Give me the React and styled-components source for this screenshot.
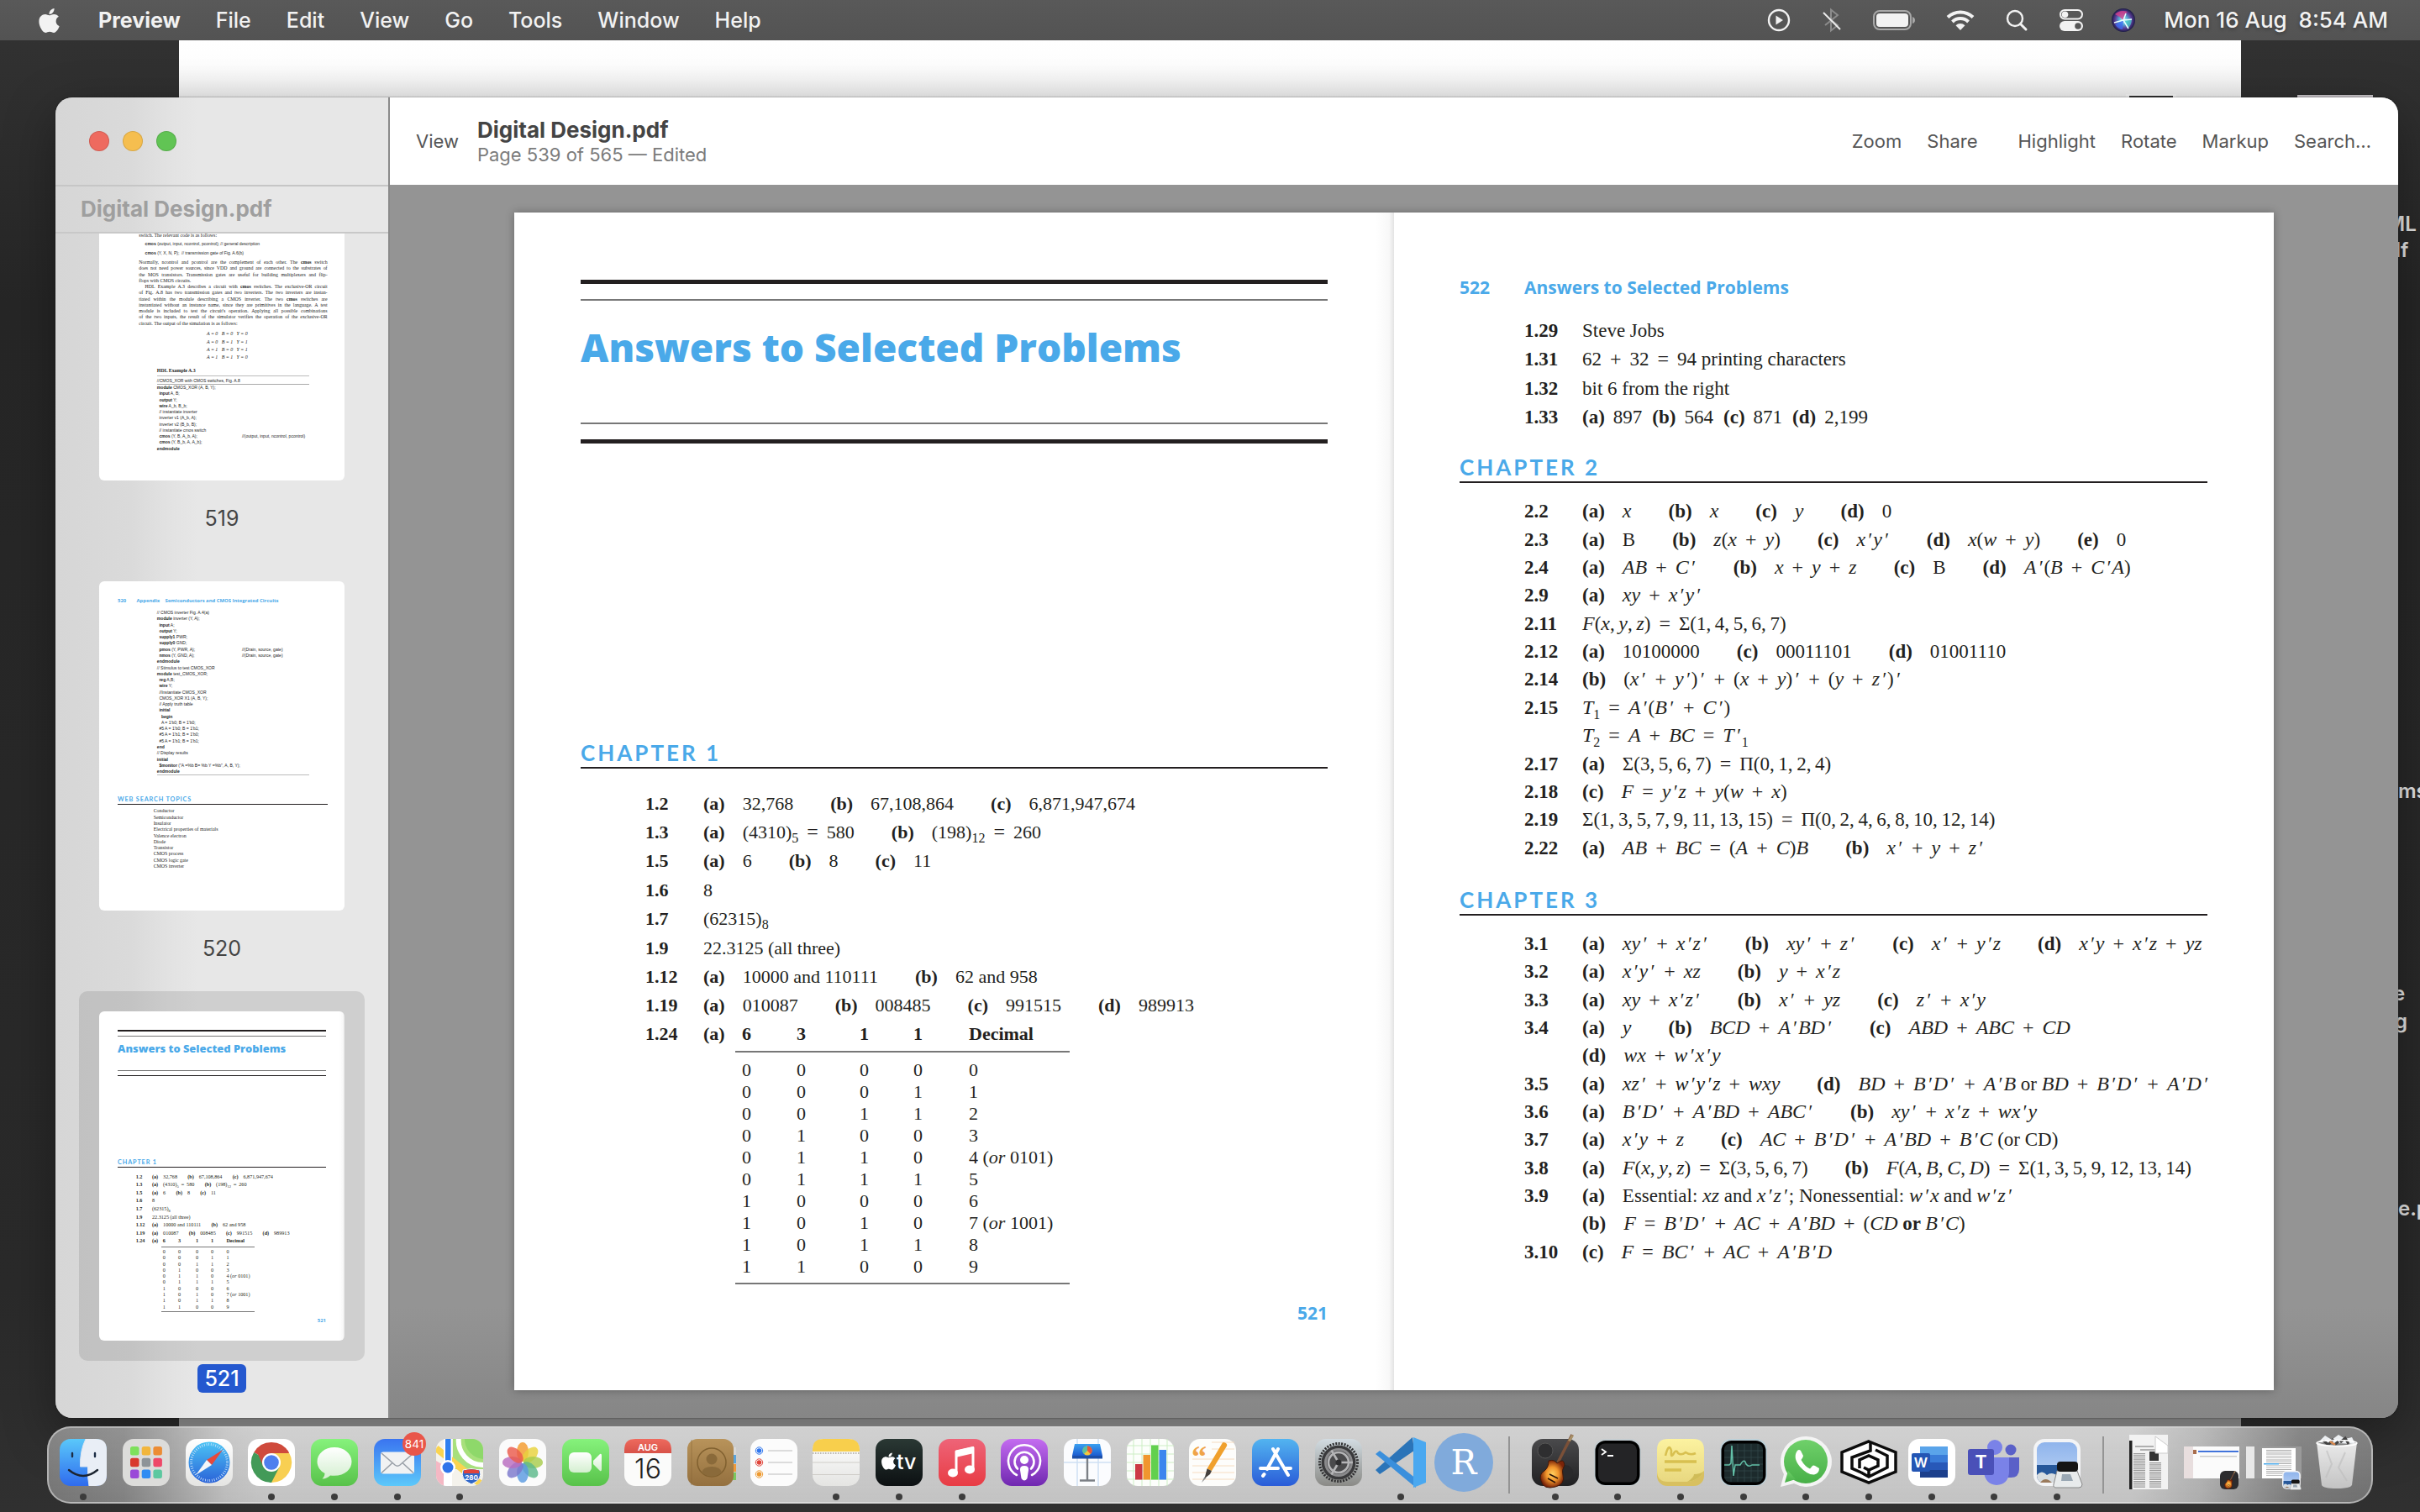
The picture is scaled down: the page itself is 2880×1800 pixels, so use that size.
import React from "react";
import styled, { createGlobalStyle, css } from "styled-components";
import { FaApple } from "react-icons/fa";

const ui = `Inter, "Liberation Sans", sans-serif`;
const serif = `"Liberation Serif", "Times New Roman", serif`;
const humanist = `Lato, "Open Sans", sans-serif`;
const display = `"Open Sans", "Noto Sans", sans-serif`;
const ink = "#231f20";
const blue = "#4aa9e9";

const GlobalStyle = createGlobalStyle`
  * { box-sizing: border-box; }
  html, body { margin: 0; height: 100%; overflow: hidden; }
  body { font-family: ${ui}; background: #2d2d2d; }
  #root { height: 100%; }
  button { font: inherit; color: inherit; background: none; border: 0; padding: 0; white-space: nowrap; }
  svg { display: block; overflow: visible; }
`;

/* ---------- desktop ---------- */

const Desktop = styled.div`
  position: relative;
  min-height: 100vh;
  overflow: hidden;
  background: linear-gradient(180deg, #333 0%, #262626 20%, #2a2a2a 85%, #303030 100%);
`;

const BackWindow = styled.div`
  position: absolute;
  inset: 48px 213px 20px 213px;
  background: linear-gradient(180deg, #fff 0, #fdfdfd 28px, #ececec 68px, #9a9a9a 90px, #9a9a9a 100%);
`;

const DesktopItem = styled.span`
  position: absolute;
  top: ${(p) => p.$top}px;
  left: ${(p) => p.$left}px;
  font-size: 24px;
  font-weight: 600;
  line-height: 30px;
  color: #e4e4e4;
  white-space: nowrap;
`;

const DesktopFile = styled.span`
  position: absolute;
  top: ${(p) => p.$top}px;
  left: ${(p) => p.$left}px;
  width: ${(p) => p.$width}px;
  height: 8px;
  background: ${(p) => p.$tone};
`;

/* ---------- menu bar ---------- */

const MenuBar = styled.header`
  position: relative;
  display: flex;
  align-items: center;
  justify-content: space-between;
  height: 48px;
  padding: 0 38px 0 42px;
  background: linear-gradient(180deg, #595959, #535353);
  color: #f2f2f2;
  font-size: 25px;
  line-height: 48px;
  text-shadow: 0 2px 4px rgba(0, 0, 0, 0.3);
`;

const MenuGroup = styled.nav`
  display: flex;
  align-items: center;
  gap: 42px;
`;

const StatusGroup = styled.div`
  display: flex;
  align-items: center;
  gap: 34px;
`;

const MenuItem = styled.button`
  font-weight: ${(p) => (p.$strong ? 700 : 500)};
`;

const StatusButton = styled.button`
  display: flex;
  justify-content: center;
  width: ${(p) => p.$width}px;
`;

const Clock = styled.time`
  font-size: 26px;
  font-weight: 500;
  white-space: pre;
`;

/* ---------- window ---------- */

const Window = styled.main`
  position: absolute;
  inset: 116px 26px 112px 66px;
  display: grid;
  grid-template-columns: 398px minmax(0, 1fr);
  border-radius: 20px;
  overflow: hidden;
  background: #949494;
  box-shadow: 0 0 2px rgba(0, 0, 0, 0.6), 0 20px 60px rgba(0, 0, 0, 0.35);
`;

const Sidebar = styled.aside`
  display: flex;
  flex-direction: column;
  min-height: 0;
  border-right: 2px solid #8b8b8b;
  background: linear-gradient(90deg, #d6d6d6 0, #dadada 90px, #e3e3e3 140px, #e7e7e7 170px);
`;

const TrafficLights = styled.div`
  display: flex;
  align-items: center;
  gap: 16px;
  flex: 0 0 104px;
  padding-left: 40px;
`;

const Light = styled.button`
  width: 24px;
  height: 24px;
  border-radius: 50%;
  background: ${(p) => p.$tone};
  box-shadow: inset 0 0 0 1px rgba(0, 0, 0, 0.12);
`;

const SidebarTitle = styled.h2`
  flex: 0 0 56px;
  margin: 0;
  padding-left: 30px;
  border-top: 2px solid #c6c6c6;
  border-bottom: 2px solid #c8c8c8;
  font-size: 26px;
  font-weight: 700;
  line-height: 54px;
  color: #9f9f9f;
`;

const ThumbList = styled.div`
  flex: 1;
  min-height: 0;
  display: flex;
  flex-direction: column;
  justify-content: flex-end;
  align-items: center;
  gap: 34px;
  padding-bottom: 30px;
  overflow: hidden;
`;

const ThumbItem = styled.button`
  display: flex;
  flex-direction: column;
  align-items: center;
  gap: 4px;
  flex: none;
  text-align: left;
  white-space: normal;
`;

const ThumbFrame = styled.span`
  display: block;
  padding: 24px;
  border-radius: 10px;
  background: ${(p) => (p.$selected ? "rgba(0, 0, 0, 0.1)" : "transparent")};
`;

const ThumbPaper = styled.span`
  display: block;
  width: 292px;
  height: 392px;
  border-radius: 6px;
  overflow: hidden;
  background: #fff;
`;

const Miniature = styled.span`
  display: block;
  zoom: 28%;
  width: 1043px;
  color: #1c1c1c;
`;

const ThumbLabel = styled.span`
  padding: 0 8px;
  border-radius: 6px;
  font-size: 25px;
  line-height: 34px;
  color: ${(p) => (p.$selected ? "#fff" : "#444")};
  background: ${(p) => (p.$selected ? "#2458cf" : "transparent")};
  font-weight: ${(p) => (p.$selected ? 500 : 400)};
`;

const Content = styled.section`
  display: flex;
  flex-direction: column;
  min-width: 0;
  background: linear-gradient(180deg, #949494 0, #949494 1440px, #868686 100%);
`;

const Toolbar = styled.div`
  display: flex;
  align-items: center;
  flex: 0 0 104px;
  padding: 0 32px 0 31px;
  background: #fff;
  color: #555;
  font-size: 22px;
`;

const DocTitle = styled.div`
  flex: 1;
  padding-left: 22px;
`;

const DocName = styled.h1`
  margin: 0;
  font-size: 26px;
  font-weight: 700;
  line-height: 32px;
  color: #444;
`;

const DocStatus = styled.p`
  margin: 0;
  line-height: 26px;
  color: #7b7b7b;
`;

const ToolGroup = styled.div`
  display: flex;
  gap: 30px;
  & + & { margin-left: 48px; }
`;

const Spread = styled.div`
  display: grid;
  grid-template-columns: minmax(0, 1fr) minmax(0, 1fr);
  margin: 33px 148px;
  background: #fff;
  box-shadow: 0 0 10px rgba(0, 0, 0, 0.3);
`;

/* ---------- printed page ---------- */

const Page = styled.article`
  display: block;
  padding: ${(p) => p.$top}px 79px 80px ${(p) => (p.$spine ? 79 : 78)}px;
  background: ${(p) => (p.$spine ? "linear-gradient(270deg, #e4e4e4 0, #f8f8f8 6px, #fff 22px)" : "#fff")};
  font-family: ${serif};
  font-size: ${(p) => p.$size}px;
  color: ${ink};
`;

const Rule = styled.hr`
  margin: ${(p) => p.$above || 0}px 0 0;
  border: 0;
  height: ${(p) => (p.$thick ? 5 : 2)}px;
  background: ${(p) => (p.$thick ? ink : "#777")};
`;

const PageTitle = styled.h2`
  margin: 27px 0 62px;
  font-family: ${display};
  font-size: 46px;
  font-weight: 800;
  line-height: 56px;
  white-space: nowrap;
  color: ${blue};
`;

const ChapterHeading = styled.h3`
  margin: ${(p) => p.$above}px 0 ${(p) => p.$below}px;
  padding-bottom: 2px;
  border-bottom: 2px solid ${ink};
  font-family: ${humanist};
  font-size: 26px;
  font-weight: 700;
  line-height: 30px;
  letter-spacing: 3px;
  color: ${blue};
`;

const PageNumber = styled.p`
  margin: 22px 0 0;
  text-align: right;
  font-family: ${display};
  font-size: 21px;
  font-weight: 700;
  line-height: 24px;
  color: ${blue};
`;

const RunningHead = styled.p`
  display: flex;
  gap: 41px;
  margin: 0 0 22px;
  font-family: ${display};
  font-size: 21px;
  font-weight: 700;
  line-height: 24px;
  color: ${blue};
`;

const AnswerList = styled.div`
  display: grid;
  grid-auto-rows: minmax(0, 1fr);
  min-height: ${(p) => p.$height}px;
  padding-left: 77px;
`;

const AnswerRow = styled.div`
  display: grid;
  grid-template-columns: 69px minmax(0, 1fr);
  align-items: center;
  line-height: 33px;
  white-space: nowrap;
`;

const Answers = styled.div`
  display: flex;
  gap: ${(p) => (p.$tight ? 12 : 44)}px;
`;

const Answer = styled.span`
  display: flex;
  gap: ${(p) => (p.$tight ? 10 : 21)}px;
`;

const Variable = styled.i`
  font-size: 24px;
  line-height: 0;
`;

const Operator = styled.span`
  margin: 0 10px;
  font-size: 24px;
  line-height: 0;
`;

const Prime = styled.i`
  margin: 0 2px;
  line-height: 0;
`;

const Sub = styled.sub`
  font-size: 16px;
  line-height: 0;
`;

const TableRow = styled.div`
  display: grid;
  grid-template-columns: 69px 38px 398px;
  padding-left: 77px;
  line-height: 34px;
`;

const TruthTable = styled.table`
  width: 398px;
  table-layout: fixed;
  border-collapse: separate;
  border-spacing: 0;
  border-bottom: 2px solid #777;
  text-align: left;
  th {
    padding: 0 0 3px;
    border-bottom: 2px solid #777;
    line-height: 34px;
  }
  td { padding: 0; line-height: 26px; }
  th:first-child, td:first-child { padding-left: 8px; }
  tbody tr:first-child td { padding-top: 8px; }
  tbody tr:last-child td { padding-bottom: 6px; }
`;

function Formula({ text }) {
  const parts = text.match(/\{[^}]*\}|\*[^*]+\*|_\d+|[A-Za-z]+|'|[+=]|,|[^A-Za-z'+=,{_*]+/g) || [];
  return (
    <span>
      {parts.map((t, i) => {
        if (t[0] === "{") return <span key={i}>{t.slice(1, -1)}</span>;
        if (t[0] === "*") return <b key={i}>{t.slice(1, -1)}</b>;
        if (t[0] === "_") return <Sub key={i}>{t.slice(1)}</Sub>;
        if (t === "'") return <Prime key={i}>′</Prime>;
        if (t === "+" || t === "=") return <Operator key={i}>{t}</Operator>;
        if (t === ",") return <span key={i}>{",\u2009"}</span>;
        if (/^[A-Za-z]/.test(t)) return <Variable key={i}>{t}</Variable>;
        return <span key={i}>{t}</span>;
      })}
    </span>
  );
}

function AnswerRows({ rows, height, tight }) {
  return (
    <AnswerList $height={height}>
      {rows.map(([num, ...answers], i) => (
        <AnswerRow key={i}>
          <b>{num}</b>
          <Answers $tight={tight && answers.length > 1}>
            {answers.map(([label, text], k) => (
              <Answer key={k} $tight={tight}>
                {label && <b>({label})</b>}
                <Formula text={text} />
              </Answer>
            ))}
          </Answers>
        </AnswerRow>
      ))}
    </AnswerList>
  );
}

const chapterOne = [
  ["1.2", ["a", "{32,768}"], ["b", "{67,108,864}"], ["c", "{6,871,947,674}"]],
  ["1.3", ["a", "(4310)_5=580"], ["b", "(198)_12=260"]],
  ["1.5", ["a", "6"], ["b", "8"], ["c", "11"]],
  ["1.6", ["", "8"]],
  ["1.7", ["", "(62315)_8"]],
  ["1.9", ["", "{22.3125 (all three)}"]],
  ["1.12", ["a", "{10000 and 110111}"], ["b", "{62 and 958}"]],
  ["1.19", ["a", "010087"], ["b", "008485"], ["c", "991515"], ["d", "989913"]],
];

const chapterOneRest = [
  ["1.29", ["", "{Steve Jobs}"]],
  ["1.31", ["", "62+32=94{ printing characters}"]],
  ["1.32", ["", "{bit 6 from the right}"]],
  ["1.33", ["a", "897"], ["b", "564"], ["c", "871"], ["d", "{2,199}"]],
];

const chapterTwo = [
  ["2.2", ["a", "x"], ["b", "x"], ["c", "y"], ["d", "0"]],
  ["2.3", ["a", "{B}"], ["b", "z(x+y)"], ["c", "x'y'"], ["d", "x(w+y)"], ["e", "0"]],
  ["2.4", ["a", "AB+C'"], ["b", "x+y+z"], ["c", "{B}"], ["d", "A'(B+C'A)"]],
  ["2.9", ["a", "xy+x'y'"]],
  ["2.11", ["", "F(x,y,z)=Σ(1,4,5,6,7)"]],
  ["2.12", ["a", "10100000"], ["c", "00011101"], ["d", "01001110"]],
  ["2.14", ["b", "(x'+y')'+(x+y)'+(y+z')'"]],
  ["2.15", ["", "T_1=A'(B'+C')"]],
  ["", ["", "T_2=A+BC=T'_1"]],
  ["2.17", ["a", "Σ(3,5,6,7)=Π(0,1,2,4)"]],
  ["2.18", ["c", "F=y'z+y(w+x)"]],
  ["2.19", ["", "Σ(1,3,5,7,9,11,13,15)=Π(0,2,4,6,8,10,12,14)"]],
  ["2.22", ["a", "AB+BC=(A+C)B"], ["b", "x'+y+z'"]],
];

const chapterThree = [
  ["3.1", ["a", "xy'+x'z'"], ["b", "xy'+z'"], ["c", "x'+y'z"], ["d", "x'y+x'z+yz"]],
  ["3.2", ["a", "x'y'+xz"], ["b", "y+x'z"]],
  ["3.3", ["a", "xy+x'z'"], ["b", "x'+yz"], ["c", "z'+x'y"]],
  ["3.4", ["a", "y"], ["b", "BCD+A'BD'"], ["c", "ABD+ABC+CD"]],
  ["", ["d", "wx+w'x'y"]],
  ["3.5", ["a", "xz'+w'y'z+wxy"], ["d", "BD+B'D'+A'B{ or }BD+B'D'+A'D'"]],
  ["3.6", ["a", "B'D'+A'BD+ABC'"], ["b", "xy'+x'z+wx'y"]],
  ["3.7", ["a", "x'y+z"], ["c", "AC+B'D'+A'BD+B'C{ (or CD)}"]],
  ["3.8", ["a", "F(x,y,z)=Σ(3,5,6,7)"], ["b", "F(A,B,C,D)=Σ(1,3,5,9,12,13,14)"]],
  ["3.9", ["a", "{Essential: }xz{ and }x'z'{; Nonessential: }w'x{ and }w'z'"]],
  ["", ["b", "F=B'D'+AC+A'BD+(CD* or *B'C)"]],
  ["3.10", ["c", "F=BC'+AC+A'B'D"]],
];

const truthRows = ["0000", "0001", "0011", "0100", "0110", "0111", "1000", "1010", "1011", "1100"];
const alternates = { 4: "0101", 7: "1001" };

function AnswersPage() {
  return (
    <Page $top={80} $size={22} $spine>
      <Rule $thick />
      <Rule $above={18} />
      <PageTitle>Answers to Selected Problems</PageTitle>
      <Rule />
      <Rule $thick $above={18} />
      <ChapterHeading $above={353} $below={24}>CHAPTER 1</ChapterHeading>
      <AnswerRows rows={chapterOne} height={275} />
      <TableRow>
        <b>1.24</b>
        <b>(a)</b>
        <TruthTable>
          <colgroup>
            <col width="73" />
            <col width="75" />
            <col width="64" />
            <col width="66" />
            <col />
          </colgroup>
          <thead>
            <tr>
              <th>6</th>
              <th>3</th>
              <th>1</th>
              <th>1</th>
              <th>Decimal</th>
            </tr>
          </thead>
          <tbody>
            {truthRows.map((bits, n) => (
              <tr key={n}>
                {bits.split("").map((b, i) => (
                  <td key={i}>{b}</td>
                ))}
                <td>
                  {n}
                  {alternates[n] && (
                    <>
                      {" "}
                      (<i>or</i> {alternates[n]})
                    </>
                  )}
                </td>
              </tr>
            ))}
          </tbody>
        </TruthTable>
      </TableRow>
      <PageNumber>521</PageNumber>
    </Page>
  );
}

function AnswersPageTwo() {
  return (
    <Page $top={77} $size={23}>
      <RunningHead>
        <span>522</span>
        <span>Answers to Selected Problems</span>
      </RunningHead>
      <AnswerRows rows={chapterOneRest} height={138} tight />
      <ChapterHeading $above={27} $below={17}>CHAPTER 2</ChapterHeading>
      <AnswerRows rows={chapterTwo} height={434} />
      <ChapterHeading $above={30} $below={17}>CHAPTER 3</ChapterHeading>
      <AnswerRows rows={chapterThree} height={400} />
    </Page>
  );
}

/* ---------- miniature pages ---------- */

const MiniPage = styled.article`
  padding: ${(p) => p.$top}px 73px 0 79px;
  font-family: ${serif};
  font-size: 21px;
  line-height: 26px;
`;

const MiniLine = styled.p`
  height: 26px;
  margin: 0 0 ${(p) => p.$below || 0}px ${(p) => (p.$indent ? 116 : 90)}px;
  text-align-last: ${(p) => (p.$loose ? "left" : "justify")};
`;

const MiniSans = styled(MiniLine)`
  font-family: "Liberation Sans", Arial, sans-serif;
  font-size: 18px;
  white-space: pre;
`;

const MiniCode = styled.div`
  margin: 0 78px 0 167px;
  font-family: "Liberation Sans", Arial, sans-serif;
  font-size: 18px;
  line-height: 26px;
  ${(p) => p.$ruled && css`border-bottom: 3px solid #bbb;`}
`;

const CodeLine = styled.div`
  display: grid;
  grid-template-columns: 352px 1fr;
  padding-left: ${(p) => p.$level * 9}px;
  white-space: nowrap;
  height: 26px;
`;

const MiniTitle = styled.div`
  margin: 0 78px 8px 167px;
  padding-bottom: 4px;
  border-bottom: 2px solid #bbb;
  font-weight: 700;
`;

const MiniCaption = styled.div`
  margin: 0 78px 0 167px;
  border-bottom: 5px double #aaa;
  font-family: "Liberation Sans", Arial, sans-serif;
  font-size: 18px;
`;

const MiniEquations = styled.div`
  margin: 16px 0 28px 378px;
  line-height: 33px;
  font-style: italic;
  white-space: pre;
`;

const MiniRunning = styled.p`
  display: flex;
  gap: 22px;
  margin: 0 0 24px;
  font-family: ${display};
  font-size: 21px;
  font-weight: 700;
  color: ${blue};
`;

const MiniFolio = styled.span`
  width: 58px;
`;

const MiniTopics = styled.div`
  padding-left: 152px;
  line-height: 26px;
`;

const proseLines = [
  "Normally, ncontrol and pcontrol are the complement of each other. The *cmos* switch",
  "does not need power sources, since VDD and ground are connected to the substrates of",
  "the MOS transistors. Transmission gates are useful for building multiplexers and flip-",
  "flops with CMOS circuits.",
  "HDL Example A.3 describes a circuit with *cmos* switches. The exclusive-OR circuit",
  "of Fig. A.8 has two transmission gates and two inverters. The two inverters are instan-",
  "tiated within the module describing a CMOS inverter. The two *cmos* switches are",
  "instantiated without an instance name, since they are primitives in the language. A test",
  "module is included to test the circuit's operation. Applying all possible combinations",
  "of the two inputs, the result of the simulator verifies the operation of the exclusive-OR",
  "circuit. The output of the simulation is as follows:",
];

const equations = ["A = 0   B = 0   Y = 0", "A = 0   B = 1   Y = 1", "A = 1   B = 0   Y = 1", "A = 1   B = 1   Y = 0"];

const xorCode = [
  [0, "*module* CMOS_XOR (A, B, Y);"],
  [1, "*input* A, B;"],
  [1, "*output* Y;"],
  [1, "*wire* A_b, B_b;"],
  [1, "// instantiate inverter"],
  [1, "inverter v1 (A_b, A);"],
  [1, "inverter v2 (B_b, B);"],
  [1, "// instantiate cmos switch"],
  [1, "*cmos* (Y, B, A_b, A);", "//(output, input, ncontrol, pcontrol)"],
  [1, "*cmos* (Y, B_b, A, A_b);"],
  [0, "*endmodule*"],
];

const inverterCode = [
  [0, "// CMOS inverter Fig. A.4(a)"],
  [0, "*module* inverter (Y, A);"],
  [1, "*input* A;"],
  [1, "*output* Y;"],
  [1, "*supply1*  PWR;"],
  [1, "*supply0*  GND;"],
  [1, "*pmos* (Y, PWR, A);", "//(Drain, source, gate)"],
  [1, "*nmos* (Y, GND, A);", "//(Drain, source, gate)"],
  [0, "*endmodule*"],
  [0, "// Stimulus to test CMOS_XOR"],
  [0, "*module* test_CMOS_XOR;"],
  [1, "*reg* A,B;"],
  [1, "*wire* Y;"],
  [1, "//Instantiate CMOS_XOR"],
  [1, "CMOS_XOR X1 (A, B, Y);"],
  [1, "// Apply truth table"],
  [1, "*initial*"],
  [2, "*begin*"],
  [2, "A = 1'b0; B = 1'b0;"],
  [1, "#5 A = 1'b0; B = 1'b1;"],
  [1, "#5 A = 1'b1; B = 1'b0;"],
  [1, "#5 A = 1'b1; B = 1'b1;"],
  [0, "*end*"],
  [0, "// Display results"],
  [0, "*initial*"],
  [1, "*$monitor* (\"A =%b  B= %b  Y =%b\", A, B, Y);"],
  [0, "*endmodule*"],
];

const topics = [
  "Conductor",
  "Semiconductor",
  "Insulator",
  "Electrical properties of materials",
  "Valence electron",
  "Diode",
  "Transistor",
  "CMOS process",
  "CMOS logic gate",
  "CMOS inverter",
];

const boldParts = (s) => s.split("*").map((t, i) => (i % 2 ? <b key={i}>{t}</b> : <span key={i}>{t}</span>));

function Code({ lines, ruled }) {
  return (
    <MiniCode $ruled={ruled}>
      {lines.map(([level, text, note], i) => (
        <CodeLine key={i} $level={level}>
          <span>{boldParts(text)}</span>
          {note && <span>{note}</span>}
        </CodeLine>
      ))}
    </MiniCode>
  );
}

function MiniPage519() {
  return (
    <MiniPage $top={345}>
      <MiniLine $loose $below={12}>switch. The relevant code is as follows:</MiniLine>
      <MiniSans $loose $indent $below={14}>{boldParts("*cmos* (output, input, ncontrol, pcontrol); // general description")}</MiniSans>
      <MiniSans $loose $indent $below={12}>{boldParts("*cmos* (Y, X, N, P);  // transmission gate of Fig. A.6(b)")}</MiniSans>
      {proseLines.map((line, i) => (
        <MiniLine key={i} $loose={line.endsWith("circuits.") || line.endsWith(":")} $indent={line.startsWith("HDL")}>
          {boldParts(line)}
        </MiniLine>
      ))}
      <MiniEquations>
        {equations.map((e) => (
          <div key={e}>{e}</div>
        ))}
      </MiniEquations>
      <MiniTitle>HDL Example A.3</MiniTitle>
      <MiniCaption>//CMOS_XOR with CMOS switches, Fig. A.8</MiniCaption>
      <Code lines={xorCode} />
    </MiniPage>
  );
}

function MiniPage520() {
  return (
    <MiniPage $top={72}>
      <MiniRunning>
        <MiniFolio>520</MiniFolio>
        <span>Appendix</span>
        <span>Semiconductors and CMOS Integrated Circuits</span>
      </MiniRunning>
      <Code lines={inverterCode} ruled />
      <ChapterHeading $above={87} $below={17}>WEB SEARCH TOPICS</ChapterHeading>
      <MiniTopics>
        {topics.map((t) => (
          <div key={t}>{t}</div>
        ))}
      </MiniTopics>
    </MiniPage>
  );
}

/* ---------- dock ---------- */

const Dock = styled.nav`
  position: absolute;
  left: 56px;
  right: 56px;
  bottom: 10px;
  height: 92px;
  display: flex;
  padding: 0 4px;
  border: 2px solid rgba(225, 225, 225, 0.55);
  border-radius: 28px;
  background:
    linear-gradient(180deg, rgba(255, 255, 255, 0.1), rgba(0, 0, 0, 0.04)),
    linear-gradient(90deg, #787878 0, #868686 90px, #c2c2c2 210px, #cbcbcb 260px, #cbcbcb 2480px, #b4b4b4 2560px, #7a7a7a 2680px, #747474 100%);
`;

const DockSlot = styled.button`
  position: relative;
  flex: 1 1 0;
  min-width: 0;
  display: flex;
  justify-content: center;
  align-items: flex-start;
  padding-top: 13px;
  &::after {
    content: "";
    position: absolute;
    bottom: 2px;
    width: 8px;
    height: 8px;
    border-radius: 50%;
    background: ${(p) => (p.$running ? "#3c3c3c" : "transparent")};
  }
`;

const DockDivider = styled.span`
  flex: 0 0 34px;
  height: 68px;
  margin-top: 10px;
  background: linear-gradient(#949494, #949494) center / 2px 100% no-repeat;
`;

const GradientStore = styled.svg`
  position: absolute;
`;

const Tile = ({ fill, children }) => (
  <svg width="56" height="56" viewBox="0 0 56 56">
    <rect width="56" height="56" rx="13" fill={fill} />
    {children}
  </svg>
);

const Gradients = () => (
  <GradientStore width="0" height="0" aria-hidden="true">
    <defs>
      {[
        ["gFinder", "#5ac8fa", "#2f6bee"],
        ["gSafari", "#4cc4f5", "#2a62d8"],
        ["gGreen", "#86f27c", "#58c24a"],
        ["gMail", "#3a74f0", "#5cc8fa"],
        ["gWhite", "#ffffff", "#e4e4e2"],
        ["gContacts", "#b8935a", "#94703f"],
        ["gTv", "#2a3834", "#0c1012"],
        ["gMusic", "#ee6478", "#e83c44"],
        ["gPod", "#c46cf0", "#7028b0"],
        ["gStore", "#52b4f0", "#2a5cd8"],
        ["gPrefs", "#d2dce2", "#8a8a86"],
        ["gDark", "#4a4a4c", "#202022"],
        ["gSticky", "#fcf2a0", "#e8d880"],
        ["gBubble", "#ffffff", "#d4efd0"],
        ["gSky", "#8fb4ec", "#bcd4f4"],
        ["gRed", "#ee6a5e", "#d85248"],
        ["gTrash", "#f0f0f0", "#c8c8c8"],
        ["gWhats", "#6fd06a", "#48b048"],
        ["gKey", "#3aa0f0", "#1c5cd0"],
      ].map(([id, a, b]) => (
        <linearGradient key={id} id={id} x1="0" y1="0" x2="0" y2="1">
          <stop offset="0" stopColor={a} />
          <stop offset="1" stopColor={b} />
        </linearGradient>
      ))}
      <clipPath id="tileClip">
        <rect width="56" height="56" rx="13" />
      </clipPath>
      <radialGradient id="gGuitar">
        <stop offset="0" stopColor="#ffd060" />
        <stop offset="0.5" stopColor="#f2962c" />
        <stop offset="1" stopColor="#7c2408" />
      </radialGradient>
      <radialGradient id="gSiri">
        <stop offset="0" stopColor="#e8ffff" />
        <stop offset="0.35" stopColor="#5ab4d8" />
        <stop offset="0.7" stopColor="#5a3c98" />
        <stop offset="1" stopColor="#1c1c44" />
      </radialGradient>
    </defs>
  </GradientStore>
);

const FinderIcon = () => (
  <Tile fill="url(#gFinder)">
    <path d="M31 0H43Q56 0 56 13V43Q56 56 43 56H35Q33 46 33.500 33H24.500Q24 14 31 0Z" fill="#e9eef6" />
    <path d="M31 0Q24 14 24.500 33H33.500Q33 46 35 56" fill="none" stroke="#dfe6f0" strokeWidth="1" />
    <path d="M15 17v4M42 17v4" stroke="#1c2c44" strokeWidth="2.400" strokeLinecap="round" />
    <path d="M11 37Q28 51 45 37" fill="none" stroke="#1c2430" strokeWidth="2.400" strokeLinecap="round" />
  </Tile>
);

const LaunchpadIcon = () => {
  const tones = ["#7ee05c", "#f2b63c", "#ec8c34", "#d8382c", "#8e9498", "#ee4868", "#9a4ad8", "#2f8cf2", "#5cc8a0"];
  return (
    <Tile fill="#dcdcda">
      {tones.map((c, i) => (
        <rect key={i} x={9 + (i % 3) * 13.7} y={9 + Math.floor(i / 3) * 13.7} width="10.500" height="10.500" rx="2.500" fill={c} />
      ))}
    </Tile>
  );
};

const SafariIcon = () => (
  <Tile fill="url(#gWhite)">
    <circle cx="28" cy="28" r="24.500" fill="url(#gSafari)" />
    <circle cx="28" cy="28" r="21.500" fill="none" stroke="#cfe6fa" strokeWidth="3" strokeDasharray="0.8 1.900" />
    <path d="M44 13L25 25L31 31Z" fill="#e8483c" />
    <path d="M12 43L25 25L31 31Z" fill="#f4f6f8" />
  </Tile>
);

const ChromeIcon = () => (
  <Tile fill="#fff">
    <path d="M28 28L7.200 16A24 24 0 0 1 48.800 16Z" fill="#cf4a3c" />
    <path d="M28 28L48.800 16A24 24 0 0 1 28 52Z" fill="#f8cf52" />
    <path d="M28 28L28 52A24 24 0 0 1 7.200 16Z" fill="#439a58" />
    <path d="M28 17H48.500L50 22L38 30Z" fill="#f8cf52" />
    <path d="M37.500 33.500L28 52L22 50L19 38Z" fill="#439a58" />
    <path d="M28 17H49L47 13L20 12L10 13L18.500 33.500Z" fill="#cf4a3c" />
    <circle cx="28" cy="28" r="11" fill="#fff" />
    <circle cx="28" cy="28" r="8.800" fill="#4f7fee" />
  </Tile>
);

const MessagesIcon = () => (
  <Tile fill="url(#gGreen)">
    <path d="M28 10C16.500 10 7.500 17.500 7.500 27C7.500 33 11 38 16.500 41C16.500 44 15 46 13.500 47.500C17.500 47.500 21 45.500 23 43.500C39 45.500 48.500 37 48.500 27C48.500 17.500 39.500 10 28 10Z" fill="url(#gBubble)" />
  </Tile>
);

const MailIcon = () => (
  <Tile fill="url(#gMail)">
    <rect x="8" y="15.500" width="40" height="26" rx="3" fill="#f1f2f3" />
    <path d="M9 17L25 31Q28 33.500 31 31L47 17M9 40.500L22 28.500M47 40.500L34 28.500" fill="none" stroke="#9aa0a8" strokeWidth="1.600" />
    <circle cx="48" cy="6" r="14" fill="#e9564a" />
    <text x="48" y="11" textAnchor="middle" fontFamily="Inter" fontSize="13.500" fill="#fff">841</text>
  </Tile>
);

const MapsIcon = () => (
  <Tile fill="#f4f2ec">
    <g clipPath="url(#tileClip)">
      <rect x="20" width="36" height="36" fill="#a8e07c" />
      <path d="M27 -2A29 29 0 0 0 56 31" fill="none" stroke="#fff" strokeWidth="6" />
      <path d="M34 -2A24 24 0 0 0 58 24V-2Z" fill="#8ed86a" />
      <path d="M0 26V56H10V32Z" fill="#f4b8c4" />
      <path d="M0 11L56 56" stroke="#fad450" strokeWidth="8" />
      <rect x="9" width="10" height="56" fill="#fff" />
      <rect x="11" width="6.500" height="34" fill="#2f7ff0" />
    </g>
    <circle cx="14" cy="34" r="9" fill="#fff" />
    <circle cx="14" cy="34" r="6.500" fill="#2f74ea" />
    <path d="M32 37Q42 34 52 37Q56 48 42 54Q28 48 32 37Z" fill="#2f66c8" stroke="#fff" />
    <path d="M33 37.500Q42 35 51 37.500V41H33Z" fill="#e0443c" />
    <text x="42" y="49" textAnchor="middle" fontFamily="Inter" fontWeight="700" fontSize="8" fill="#fff">280</text>
  </Tile>
);

const PhotosIcon = () => (
  <Tile fill="#fbfbfb">
    {["#f39a2c", "#e8d23c", "#a8cc4c", "#5cb88a", "#5a9ae0", "#7a78cc", "#b86cc0", "#ea5a4c"].map((c, i) => (
      <ellipse key={i} cx="28" cy="15.500" rx="7" ry="11.500" fill={c} opacity="0.82" transform={`rotate(${i * 45} 28 28)`} />
    ))}
  </Tile>
);

const FaceTimeIcon = () => (
  <Tile fill="url(#gGreen)">
    <rect x="8" y="16" width="27" height="24" rx="6" fill="url(#gBubble)" />
    <path d="M37 26L45 18Q47 17 47 20V36Q47 39 45 38L37 30Z" fill="url(#gBubble)" />
  </Tile>
);

const CalendarIcon = () => (
  <Tile fill="#fbfbfa">
    <path d="M0 17V13Q0 0 13 0H43Q56 0 56 13V17Z" fill="url(#gRed)" />
    <text x="28" y="13.500" textAnchor="middle" fontFamily="Inter" fontWeight="600" fontSize="11" fill="#fff">AUG</text>
    <text x="28" y="47" textAnchor="middle" fontFamily="Inter" fontWeight="300" fontSize="32" fill="#222">16</text>
  </Tile>
);

const ContactsIcon = () => (
  <svg width="56" height="56" viewBox="0 0 56 56">
    <path d="M46 10h12v9H46z" fill="#d8d8d8" />
    <path d="M46 19h12v10H46z" fill="#5aa4dc" />
    <path d="M46 30h12v9H46z" fill="#ee9a3c" />
    <path d="M46 40h12v9H46z" fill="#7cc860" />
    <rect width="55" height="56" rx="12" fill="url(#gContacts)" />
    <path d="M5 1v54" stroke="#8a6838" strokeWidth="1" opacity="0.600" />
    <circle cx="29" cy="28" r="17" fill="none" stroke="#80602f" strokeWidth="1.500" />
    <circle cx="29" cy="24" r="6.500" fill="#8a6a3a" />
    <path d="M17 40Q19 33 29 33Q39 33 41 40Q29 49 17 40Z" fill="#8a6a3a" />
  </svg>
);

const RemindersIcon = () => (
  <Tile fill="#fcfcfc">
    {["#2f76ee", "#e0443a", "#ee9a30"].map((c, i) => (
      <g key={c}>
        <circle cx="10.500" cy={14 + i * 14} r="4.200" fill="none" stroke={c} strokeWidth="1" />
        <circle cx="10.500" cy={14 + i * 14} r="2.800" fill={c} />
        <path d={`M21 ${14 + i * 14}H50`} stroke="#d4d4d4" strokeWidth="1.600" />
      </g>
    ))}
  </Tile>
);

const NotesIcon = () => (
  <Tile fill="url(#gWhite)">
    <path d="M0 15V13Q0 0 13 0H43Q56 0 56 13V15Z" fill="#f8cf4c" />
    <path d="M0 17H56" stroke="#a8a49a" strokeWidth="1.500" strokeDasharray="1.500 1.500" />
    <path d="M0 28H56M0 42.500H56" stroke="#cfcdc8" strokeWidth="1.200" />
  </Tile>
);

const TvIcon = () => (
  <Tile fill="url(#gTv)">
    <g transform="translate(4 15)" color="#fff">
      <FaApple size="23" />
    </g>
    <text x="25" y="36" fontFamily="Inter" fontWeight="500" fontSize="25" fill="#fff">tv</text>
  </Tile>
);

const MusicIcon = () => (
  <Tile fill="url(#gMusic)">
    <path d="M21 40V15L41 10.500V36" fill="none" stroke="#fff" strokeWidth="3" strokeLinejoin="round" />
    <path d="M20 14L42 9V17L20 22Z" fill="#fff" />
    <ellipse cx="17" cy="40.500" rx="6" ry="5" fill="#fff" />
    <ellipse cx="37" cy="36.500" rx="6" ry="5" fill="#fff" />
  </Tile>
);

const PodcastsIcon = () => (
  <Tile fill="url(#gPod)">
    <g fill="none" stroke="#fff" strokeWidth="2.600" strokeLinecap="round">
      <path d="M19 43A19 19 0 1 1 37 43" />
      <path d="M20 35.500A11.500 11.500 0 1 1 36 35.500" />
    </g>
    <circle cx="28" cy="25" r="5" fill="#fff" />
    <path d="M28 32Q33.500 32 33 37L31.500 47Q28 52 24.500 47L23 37Q22.500 32 28 32Z" fill="#fff" />
  </Tile>
);

const KeynoteIcon = () => (
  <Tile fill="#fbfcfe">
    <path d="M16 0V56M41 0V56M0 28H56" stroke="#cfe0f4" strokeWidth="1.500" />
    <path d="M28 22V49M19 49.500H37" stroke="#7c8086" strokeWidth="2.400" />
    <path d="M13 6H43L46 20H10Z" fill="url(#gKey)" />
    <path d="M10 20H46V23.500H10Z" fill="#1c4fa8" />
    <circle cx="28" cy="14" r="5.500" fill="#f2c83c" />
    <path d="M28 14V8.500A5.500 5.500 0 0 1 32 18Z" fill="#e8583c" />
    <path d="M28 14L24 18A5.500 5.500 0 0 1 28 8.500Z" fill="#5cc0a0" />
  </Tile>
);

const NumbersIcon = () => (
  <Tile fill="#fcfefb">
    <path d="M8 0V56M18 0V56M28 0V56M38 0V56M48 0V56M0 8H56M0 18H56M0 28H56M0 38H56M0 48H56" stroke="#cdeec4" strokeWidth="1" />
    <rect x="10" y="30" width="8.500" height="18.500" fill="#cc3a44" />
    <rect x="19.500" y="19" width="8.500" height="29.500" fill="#f0962e" />
    <rect x="29" y="7.500" width="8.500" height="41" fill="#62d04e" />
    <rect x="38.500" y="13" width="8.500" height="35.500" fill="#3b86ee" />
  </Tile>
);

const PagesIcon = () => (
  <Tile fill="#fdfdfb">
    <path d="M27 4H54M27 12H54M4 24H54M4 32H54M4 40H54M4 48H54" stroke="#f6dcc0" strokeWidth="1" />
    <text x="3" y="33" fontFamily="Liberation Serif" fontWeight="700" fontSize="36" fill="#f0a448">“</text>
    <path d="M39 6Q40 3 43 4.500Q46 6 45 8.500L27 38L21.500 35.500Z" fill="#f0a02c" />
    <path d="M21.500 35.500L27 38L25 42L18.500 47Z" fill="#44403c" />
    <path d="M18.500 45L15 52L20.500 46.500Z" fill="#888" />
  </Tile>
);

const AppStoreIcon = () => (
  <Tile fill="url(#gStore)">
    <g stroke="#fff" strokeWidth="4" strokeLinecap="round">
      <path d="M31 12L18 36M25 12L43 43M10 35H31M39 35H46M14.500 42L13 44" />
    </g>
  </Tile>
);

const PrefsIcon = () => (
  <Tile fill="url(#gPrefs)">
    <circle cx="28" cy="28" r="22.500" fill="none" stroke="#2e2e30" strokeWidth="3" strokeDasharray="2 1.500" />
    <circle cx="28" cy="28" r="20.500" fill="#3a3a3c" />
    <circle cx="28" cy="28" r="17" fill="#8a8a8c" />
    <circle cx="28" cy="28" r="14" fill="#4a4a4c" />
    <g stroke="#b4b4b6" strokeWidth="2.600" fill="none">
      <circle cx="28" cy="28" r="12" />
      <path d="M28 28H45M28 28L19.500 13.500M28 28L19.500 42.500" />
    </g>
    <circle cx="28" cy="28" r="3.500" fill="#2e2e30" />
  </Tile>
);

const VSCodeIcon = () => (
  <svg width="56" height="56" viewBox="0 0 56 56">
    <path d="M42 -2L-2 37L3 42L44 14Z" fill="#2b74b8" />
    <path d="M-2 18L3 14L46 47V58Z" fill="#3a8fdc" />
    <path d="M43 -2L58 4V52L43 58Z" fill="#4aa8f0" />
    <path d="M43 15L25 28L43 42Z" fill="#cbcbcb" />
  </svg>
);

const RIcon = () => (
  <svg width="56" height="56" viewBox="0 0 56 56">
    <circle cx="28" cy="28" r="35" fill="#80aadb" />
    <text x="28" y="42" textAnchor="middle" fontFamily="DejaVu Serif" fontSize="41" fill="#fff">R</text>
  </svg>
);

const GuitarShape = () => (
  <>
    <path d="M48 -5L29 32" stroke="#7a5038" strokeWidth="3.500" />
    <path d="M47 -5L50 -4L46 3L43 2Z" fill="#a89068" />
    <path d="M20 26Q27 24 30 29Q38 22 39 31Q35 38 37 43Q40 54 28 57Q14 61 11 50Q8 42 15 38Q20 34 20 26Z" fill="url(#gGuitar)" stroke="#401808" strokeWidth="1" />
    <path d="M21 42L31 47M19 47L28 52" stroke="#2c1408" strokeWidth="1.500" />
  </>
);

const GarageIcon = () => (
  <Tile fill="url(#gDark)">
    <circle cx="16" cy="14" r="9" fill="#2e2e30" stroke="#555" />
    <circle cx="40" cy="40" r="9" fill="#2a2a2c" />
    <GuitarShape />
  </Tile>
);

const TerminalIcon = () => (
  <Tile fill="#c4ccd0">
    <rect x="1.500" y="2" width="53" height="53" rx="12" fill="#000" />
    <rect x="5" y="5.500" width="46" height="46" rx="8" fill="#242426" />
    <path d="M9 12L14 15.500L9 19M16 20H23" fill="none" stroke="#fff" strokeWidth="1.800" />
  </Tile>
);

const StickiesIcon = () => (
  <svg width="56" height="56" viewBox="0 0 56 56">
    <rect y="2" width="56" height="54" rx="12" fill="#d8c060" />
    <path d="M13 0H43Q56 0 56 13V38Q50 50 36 51H13Q0 51 0 38V13Q0 0 13 0Z" fill="url(#gSticky)" />
    <path d="M56 38Q50 50 36 51Q44 46 44 42Q52 42 56 38Z" fill="#d0bc58" />
    <path d="M10 20Q14 4 17 14Q16 24 20 17Q23 12 25 17Q29 20 34 16Q40 20 46 17" fill="none" stroke="#d8c050" strokeWidth="2.600" />
    <path d="M9 27H47M9 37H29" stroke="#d8c050" strokeWidth="3.500" />
  </svg>
);

const ActivityIcon = () => (
  <Tile fill="#bcd0d8">
    <rect x="1.500" y="2" width="53" height="53" rx="12" fill="#000" />
    <rect x="5" y="5.500" width="46" height="46" rx="7" fill="#1c2a2c" />
    <path d="M13 6V51M21 6V51M29 6V51M37 6V51M45 6V51M5 14H51M5 22H51M5 30H51M5 38H51M5 46H51" stroke="#34484a" strokeWidth="0.800" />
    <path d="M5 31H11L13 29L14 8L16 44L18 31H24Q29 22 31 30Q34 34 38 31H47" fill="none" stroke="#62c0a8" strokeWidth="1.500" />
  </Tile>
);

const WhatsAppIcon = () => (
  <svg width="56" height="56" viewBox="0 0 56 56">
    <path d="M28 -3A30 30 0 1 1 14 53L-2 57L2 42A30 30 0 0 1 28 -3Z" fill="#f4f4f4" />
    <circle cx="28" cy="27" r="26" fill="url(#gWhats)" />
    <path d="M3 52L7 38L16 48Z" fill="url(#gWhats)" />
    <path d="M18 14Q20 12 22 14L25 20Q25 22 22.500 25Q27 33 33 35.500L36 32Q37 31 39 32L44 35Q44 41 38 42.500Q30 43 21 33Q12 22 18 14Z" fill="#fff" />
  </svg>
);

const HexIcon = () => (
  <svg width="56" height="56" viewBox="0 0 56 56">
    <path d="M28 3L59 16V39L28 52L-3 39V16Z" fill="#fff" />
    <g fill="none" stroke="#0c0c0c" strokeWidth="3.500">
      <path d="M28 3L60 16V39L28 52L-4 39V16Z" />
      <path d="M30 4V14L8 22V35L19 40M36 13L50 20V34L28 45L19 40M28 45V36M17 35V25L28 20L39 25V32L28 37L22 34" />
    </g>
  </svg>
);

const WordIcon = () => (
  <Tile fill="#fff">
    <rect x="14" y="9" width="33" height="10" fill="#5aa4ea" />
    <rect x="14" y="19" width="33" height="9" fill="#3a7cd8" />
    <rect x="14" y="28" width="33" height="9" fill="#2858b8" />
    <rect x="14" y="37" width="33" height="9" fill="#1c408c" />
    <rect x="4" y="17" width="22" height="22" rx="2" fill="#2456b4" />
    <text x="15" y="34" textAnchor="middle" fontFamily="Inter" fontWeight="600" fontSize="16" fill="#fff">W</text>
  </Tile>
);

const TeamsIcon = () => (
  <svg width="56" height="56" viewBox="0 0 56 56">
    <circle cx="48" cy="13" r="6.500" fill="#5a60c8" />
    <path d="M42 22H58V36Q58 46 48 46H42Z" fill="#5a60c8" />
    <circle cx="29" cy="10" r="9" fill="#7a82e8" />
    <path d="M16 22H46V40Q45 54 31 55Q18 54 16 40Z" fill="#7a82e8" />
    <rect x="-3" y="12" width="31" height="31" rx="3" fill="#4a50b8" />
    <text x="12.500" y="35" textAnchor="middle" fontFamily="Inter" fontWeight="700" fontSize="21" fill="#fff">T</text>
  </svg>
);

const PreviewArt = () => (
  <>
    <rect x="4" y="4" width="48" height="48" rx="9" fill="url(#gSky)" />
    <path d="M4 31H52V43Q52 52 43 52H13Q4 52 4 43Z" fill="#27589a" />
    <path d="M4 43Q10 36 16 43Q22 38 30 45L28 52H13Q4 52 4 43Z" fill="#d8dde0" />
    <path d="M8 52Q14 44 22 52Z" fill="#9a7a5c" />
    <path d="M28 38H52L58 54Q58 58 54 58H27Q23 58 24 54Z" fill="#e8ebec" stroke="#888" strokeWidth="1" />
    <path d="M34 42H44L47 50H33Z" fill="#9aa8b4" />
    <rect x="28" y="27" width="25" height="12" rx="4" fill="#151515" />
  </>
);

const PreviewIcon = () => (
  <Tile fill="#f3f4f6">
    <PreviewArt />
  </Tile>
);

const DocumentIcon = () => (
  <svg width="56" height="56" viewBox="0 0 56 56">
    <rect x="5" y="-5" width="46" height="65" fill="#f2f2f2" />
    <rect x="5" y="2" width="3.500" height="58" fill="#222" />
    <path d="M12 9H34M18 13H40" stroke="#999" strokeWidth="1.500" />
    <path d="M17 17V58" stroke="#999" strokeWidth="14" strokeDasharray="1.200 1" />
    <path d="M36 28V58" stroke="#999" strokeWidth="14" strokeDasharray="1.200 1" />
    <rect x="29" y="15" width="11" height="11" fill="#333" />
    <path d="M36 -3L51 8V17H36Z" fill="#fff" stroke="#ccc" />
  </svg>
);

const WindowMiniA = () => (
  <svg width="56" height="56" viewBox="0 0 56 56">
    <rect x="-5" y="9" width="66" height="38" fill="#fbfbfb" />
    <rect x="-5" y="9" width="11" height="38" fill="#e8dede" />
    <rect x="12" y="14" width="48" height="1.800" fill="#2f66d8" />
    <rect x="14" y="20" width="44" height="1.500" fill="#ccc" />
    <rect x="6" y="13" width="4" height="5" fill="#a86c4c" />
    <rect x="38" y="38" width="22" height="22" rx="6" fill="#2c2c2e" />
    <g transform="translate(40 40) scale(0.330)">
      <GuitarShape />
    </g>
  </svg>
);

const WindowMiniB = () => (
  <svg width="56" height="56" viewBox="0 0 56 56">
    <rect x="-5" y="9" width="66" height="38" fill="#9a9a9a" />
    <rect x="-5" y="9" width="10" height="38" fill="#e8e8e8" />
    <rect x="14" y="11" width="40" height="36" fill="#fff" />
    <path d="M34 13V45" stroke="#aaa" strokeWidth="30" strokeDasharray="0.900 1.400" />
    <rect x="16" y="29" width="18" height="1.500" fill={blue} />
    <g transform="translate(38 38) scale(0.390)">
      <rect width="56" height="56" rx="13" fill="#f3f4f6" />
      <PreviewArt />
    </g>
  </svg>
);

const TrashIcon = () => (
  <svg width="56" height="56" viewBox="0 0 56 56">
    <path d="M6 4L14 -4L22 1L30 -5L38 0L46 -2L50 6Z" fill="#eceff2" />
    <path d="M12 2L18 7L24 0M32 4L38 -1L42 6M24 8L30 3" stroke="#444" strokeWidth="3" fill="none" />
    <path d="M20 3L26 7" stroke="#d8884c" strokeWidth="2.500" />
    <path d="M4 4Q28 12 52 4L46 55Q44 59 28 59Q12 59 10 55Z" fill="url(#gTrash)" opacity="0.940" />
    <path d="M16 14L22 30L15 46M38 16L30 34L40 50" stroke="#bcbcbc" strokeWidth="2" fill="none" opacity="0.600" />
    <ellipse cx="28" cy="5" rx="24" ry="3.500" fill="none" stroke="#fff" strokeWidth="1.500" />
  </svg>
);

const dockItems = [
  ["Finder", FinderIcon, true],
  ["Launchpad", LaunchpadIcon],
  ["Safari", SafariIcon],
  ["Chrome", ChromeIcon, true],
  ["Messages", MessagesIcon, true],
  ["Mail", MailIcon, true],
  ["Maps", MapsIcon, true],
  ["Photos", PhotosIcon],
  ["FaceTime", FaceTimeIcon],
  ["Calendar", CalendarIcon],
  ["Contacts", ContactsIcon],
  ["Reminders", RemindersIcon],
  ["Notes", NotesIcon, true],
  ["TV", TvIcon, true],
  ["Music", MusicIcon, true],
  ["Podcasts", PodcastsIcon],
  ["Keynote", KeynoteIcon],
  ["Numbers", NumbersIcon],
  ["Pages", PagesIcon],
  ["App Store", AppStoreIcon],
  ["System Preferences", PrefsIcon],
  ["Visual Studio Code", VSCodeIcon, true],
  ["R", RIcon],
  null,
  ["GarageBand", GarageIcon, true],
  ["Terminal", TerminalIcon, true],
  ["Stickies", StickiesIcon, true],
  ["Activity Monitor", ActivityIcon, true],
  ["WhatsApp", WhatsAppIcon, true],
  ["Hexagon", HexIcon, true],
  ["Word", WordIcon, true],
  ["Teams", TeamsIcon, true],
  ["Preview", PreviewIcon, true],
  null,
  ["Document", DocumentIcon],
  ["GarageBand window", WindowMiniA],
  ["Preview window", WindowMiniB],
  ["Trash", TrashIcon],
];

/* ---------- status icons ---------- */

const PlayStatus = () => (
  <svg width="28" height="28" viewBox="0 0 28 28">
    <circle cx="14" cy="14" r="12" fill="none" stroke="#f2f2f2" strokeWidth="2.400" />
    <path d="M10.500 8.500L19 14L10.500 19.500Z" fill="#f2f2f2" />
  </svg>
);

const BluetoothOff = () => (
  <svg width="22" height="28" viewBox="0 0 22 28">
    <path d="M3 20L18 8L10 1.500V26.500L18 20L8 12" fill="none" stroke="#8c8c8c" strokeWidth="2" />
    <path d="M1 5L21 25" stroke="#ececec" strokeWidth="2" />
  </svg>
);

const Battery = () => (
  <svg width="50" height="24" viewBox="0 0 50 24">
    <rect x="1" y="1" width="44" height="22" rx="7" fill="none" stroke="#a8a8a8" strokeWidth="2" />
    <rect x="4" y="4" width="38" height="16" rx="4" fill="#f2f2f2" />
    <path d="M47 8Q50 9 50 12Q50 15 47 16Z" fill="#a8a8a8" />
  </svg>
);

const Wifi = () => (
  <svg width="34" height="26" viewBox="0 0 34 26">
    <g fill="none" stroke="#f2f2f2" strokeWidth="4">
      <path d="M2 9.500A21.500 21.500 0 0 1 32 9.500" />
      <path d="M7.500 15A13.500 13.500 0 0 1 26.500 15" />
    </g>
    <path d="M17 25L11.500 19.300A8 8 0 0 1 22.500 19.300Z" fill="#f2f2f2" />
  </svg>
);

const Search = () => (
  <svg width="26" height="26" viewBox="0 0 26 26">
    <circle cx="11" cy="11" r="9" fill="none" stroke="#f2f2f2" strokeWidth="2.400" />
    <path d="M17.500 17.500L24 24" stroke="#f2f2f2" strokeWidth="3" strokeLinecap="round" />
  </svg>
);

const ControlCentre = () => (
  <svg width="28" height="26" viewBox="0 0 28 26">
    <rect x="1" y="1" width="26" height="10.500" rx="5.200" fill="none" stroke="#f2f2f2" strokeWidth="2" />
    <circle cx="6.500" cy="6.200" r="3.800" fill="#f2f2f2" />
    <rect y="14" width="28" height="12" rx="6" fill="#f2f2f2" />
    <circle cx="22" cy="20" r="3.800" fill="#555" />
  </svg>
);

const Siri = () => (
  <svg width="28" height="28" viewBox="0 0 28 28">
    <circle cx="14" cy="14" r="14" fill="url(#gSiri)" />
    <path d="M4 7Q10 1 19 4Q14 8 14 14Q9 9 4 7Z" fill="#d8408c" opacity="0.800" />
    <path d="M14 14L24 12Q24 20 19 24Z" fill="#48d0c8" opacity="0.700" />
    <path d="M14 14L4 19Q8 25 13 25Z" fill="#3c6cf0" opacity="0.800" />
    <path d="M3 17L14 14L17 6M14 14L20 24M14 14L24 13" stroke="#e8ffff" strokeWidth="1.500" fill="none" />
  </svg>
);

const statusItems = [
  ["Now Playing", 36, PlayStatus],
  ["Bluetooth", 22, BluetoothOff],
  ["Battery", 58, Battery],
  ["Wi-Fi", 32, Wifi],
  ["Spotlight", 34, Search],
  ["Control Centre", 28, ControlCentre],
  ["Siri", 28, Siri],
];

const desktopLabels = [
  ["ML", 2840, 252],
  ["df", 2842, 283],
  ["ms", 2854, 927],
  ["e", 2848, 1168],
  ["g", 2850, 1201],
  ["e.p", 2854, 1424],
];

const thumbs = [
  ["519", MiniPage519],
  ["520", MiniPage520],
  ["521", AnswersPage],
];

export default function App() {
  return (
    <Desktop>
      <GlobalStyle />
      <Gradients />
      <BackWindow />
      <DesktopFile $top={112} $left={2530} $width={60} $tone="#f4f4f4" />
      <DesktopFile $top={114} $left={2534} $width={52} $tone="#333" />
      <DesktopFile $top={113} $left={2734} $width={90} $tone="#c8c4c8" />
      {desktopLabels.map(([text, left, top]) => (
        <DesktopItem key={top} $left={left} $top={top}>{text}</DesktopItem>
      ))}
      <MenuBar>
        <MenuGroup>
          <MenuItem aria-label="Apple menu">
            <FaApple size="33" />
          </MenuItem>
          <MenuItem $strong>Preview</MenuItem>
          {["File", "Edit", "View", "Go", "Tools", "Window", "Help"].map((m) => (
            <MenuItem key={m}>{m}</MenuItem>
          ))}
        </MenuGroup>
        <StatusGroup>
          {statusItems.map(([name, width, Icon]) => (
            <StatusButton key={name} aria-label={name} $width={width}>
              <Icon />
            </StatusButton>
          ))}
          <Clock>Mon 16 Aug  8:54 AM</Clock>
        </StatusGroup>
      </MenuBar>

      <Window>
        <Sidebar>
          <TrafficLights>
            <Light aria-label="Close" $tone="#ee6a5f" />
            <Light aria-label="Minimise" $tone="#f5be4f" />
            <Light aria-label="Zoom window" $tone="#61c454" />
          </TrafficLights>
          <SidebarTitle>Digital Design.pdf</SidebarTitle>
          <ThumbList>
            {thumbs.map(([n, Mini]) => (
              <ThumbItem key={n}>
                <ThumbFrame $selected={n === "521"}>
                  <ThumbPaper>
                    <Miniature>
                      <Mini />
                    </Miniature>
                  </ThumbPaper>
                </ThumbFrame>
                <ThumbLabel $selected={n === "521"}>{n}</ThumbLabel>
              </ThumbItem>
            ))}
          </ThumbList>
        </Sidebar>
        <Content>
          <Toolbar>
            <button>View</button>
            <DocTitle>
              <DocName>Digital Design.pdf</DocName>
              <DocStatus>Page 539 of 565 — Edited</DocStatus>
            </DocTitle>
            <ToolGroup>
              <button>Zoom</button>
              <button>Share</button>
            </ToolGroup>
            <ToolGroup>
              <button>Highlight</button>
              <button>Rotate</button>
              <button>Markup</button>
              <button>Search…</button>
            </ToolGroup>
          </Toolbar>
          <Spread>
            <AnswersPage />
            <AnswersPageTwo />
          </Spread>
        </Content>
      </Window>

      <Dock aria-label="Dock">
        {dockItems.map((item, i) => {
          if (!item) return <DockDivider key={i} />;
          const [name, Icon, running] = item;
          return (
            <DockSlot key={name} aria-label={name} $running={running}>
              <Icon />
            </DockSlot>
          );
        })}
      </Dock>
    </Desktop>
  );
}
